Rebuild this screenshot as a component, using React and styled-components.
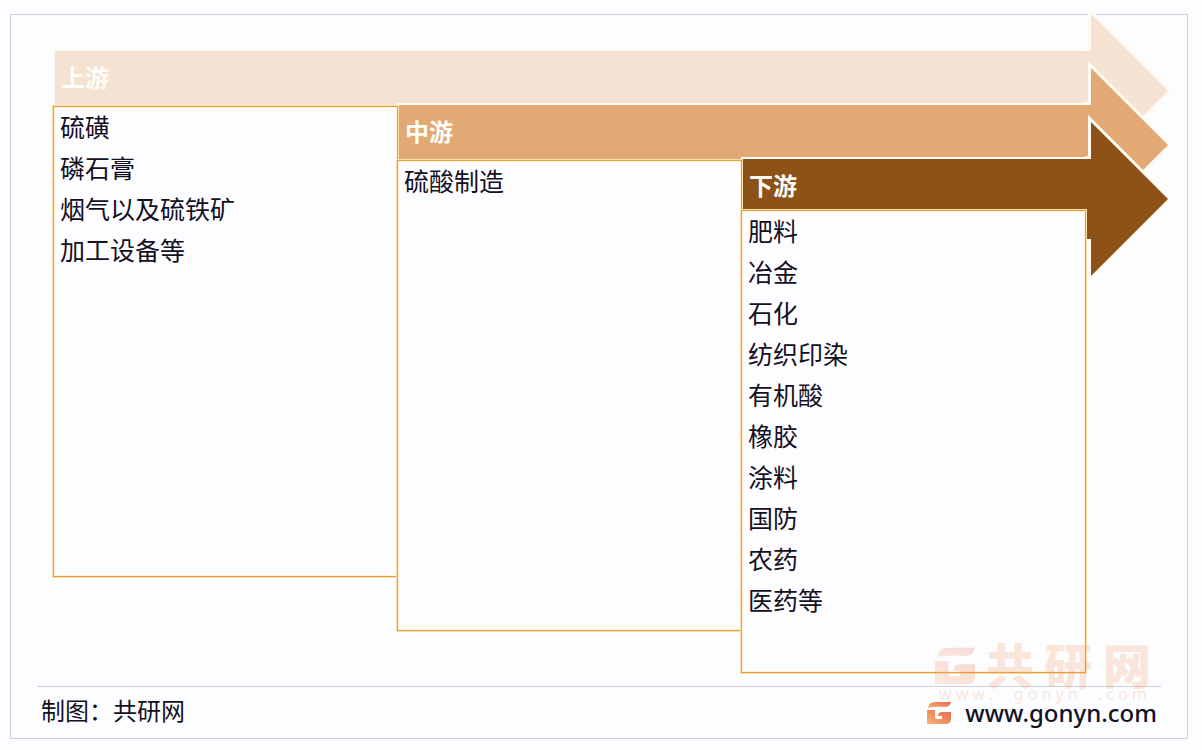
import styled, { createGlobalStyle } from "styled-components";

const STAGES = [
  {
    title: "上游",
    color: "#f5e2d3",
    bandHeight: 93,
    boxHeight: 471,
    items: ["硫磺", "磷石膏", "烟气以及硫铁矿", "加工设备等"],
  },
  {
    title: "中游",
    color: "#e2a974",
    bandHeight: 93,
    boxHeight: 471,
    items: ["硫酸制造"],
  },
  {
    title: "下游",
    color: "#8c5218",
    bandHeight: 89,
    boxHeight: 463,
    items: [
      "肥料",
      "冶金",
      "石化",
      "纺织印染",
      "有机酸",
      "橡胶",
      "涂料",
      "国防",
      "农药",
      "医药等",
    ],
  },
];

export default function App() {
  return (
    <StPage>
      <GlobalStyle />
      <StFrame>
        <StChain>
          {STAGES.map((stage, index) => (
            <Stage key={stage.title} index={index} {...stage} />
          ))}
        </StChain>
        <StFooter>
          <Watermark />
          <StCredit>制图：共研网</StCredit>
          <StSiteLink href='http://www.gonyn.com'>
            <Logo width={24} height={22} />
            www.gonyn.com
          </StSiteLink>
        </StFooter>
      </StFrame>
    </StPage>
  );
}

function Stage({ index, title, color, bandHeight, boxHeight, items }) {
  return (
    <StStage $index={index}>
      <StArrow>
        <StBand $color={color}>
          <StTitle>{title}</StTitle>
        </StBand>
        <StArrowHead viewBox='0 0 84 156' aria-hidden='true'>
          <path d='M0 38H6V1L83 78L6 155V118H0' fill={color} />
        </StArrowHead>
      </StArrow>
      <StBox $top={bandHeight} $height={boxHeight}>
        {items.map((item) => (
          <li key={item}>{item}</li>
        ))}
      </StBox>
    </StStage>
  );
}

function Logo({ width, height }) {
  return (
    <svg width={width} height={height} viewBox='0 0 24 22' aria-hidden='true'>
      <defs>
        <linearGradient id='logo' x1='1' y1='0' x2='0' y2='1'>
          <stop offset='0' stopColor='#e0694f' />
          <stop offset='1' stopColor='#f8b577' />
        </linearGradient>
      </defs>
      <g fill='url(#logo)'>
        <path d='M1 6Q2 0 8 0H24Q23 5 18 5Q7 4 1 6Z' />
        <path d='M0 8H8V15Q8 17 10 17H15V14H11Q11 10 15 10H24V18Q23 22 19 22H0Z' />
      </g>
    </svg>
  );
}

function Watermark() {
  return (
    <StWatermark aria-hidden='true'>
      <StWatermarkName>
        <Logo width={40} height={38} />
        <span>共</span>
        <span>研</span>
        <span>网</span>
      </StWatermarkName>
      <StWatermarkUrl>
        <span>w w w .</span>
        <span>g o n y n</span>
        <span>. c o m</span>
      </StWatermarkUrl>
    </StWatermark>
  );
}

const GlobalStyle = createGlobalStyle`
  * {
    box-sizing: border-box;
  }
  body {
    margin: 0;
    background-color: #fdfdff;
    color: #14101f;
    font-family: "Noto Sans", "Noto Sans CJK SC", sans-serif;
  }
`;
const StPage = styled.main`
  min-height: 100vh;
  padding: 14px 14px 11px 10px;

  display: flex;
`;
const StFrame = styled.section`
  flex: 1;
  display: flex;
  flex-direction: column;

  border: 1px solid #cdd0d8;
  background-color: #fcfdff;
`;
const StChain = styled.div`
  flex: 1;
  display: grid;
  grid-template-columns: repeat(3, 1fr) 84px;
  align-items: start;

  padding: 0 18px 0 42px;
`;
const StStage = styled.section`
  grid-row: 1;
  grid-column: ${({ $index }) => $index + 1} / -1;
  display: grid;
  grid-template-columns: subgrid;

  margin-top: ${({ $index }) => $index * 54 - 2}px;
`;
const StArrow = styled.header`
  grid-row: 1;
  grid-column: 1 / -1;
  display: flex;
  align-items: flex-start;
`;
const StBand = styled.div`
  flex: 1;
  height: 80px;
  margin: 38px 0 0 2px;
  padding: 8px 6px;

  background-color: ${({ $color }) => $color};
  box-shadow: 0 0 0 2px #fffaf2;
`;
const StTitle = styled.h2`
  margin: 0;

  color: #fffdf8;
  font-size: 24px;
  font-weight: 700;
  line-height: 38px;
`;
const StArrowHead = styled.svg`
  width: 84px;
  height: 156px;
  overflow: visible;

  path {
    stroke: #fffaf2;
    stroke-width: 6px;
    paint-order: stroke;
  }
`;
const StBox = styled.ul`
  grid-row: 1;
  grid-column: 1;
  z-index: 1;

  min-height: ${({ $height }) => $height}px;
  margin: ${({ $top }) => $top}px -1px 0 0;
  padding: 0 6px;
  border: 1px solid #e3a03f;
  box-shadow:
    0 0 0 1px #fbdfae,
    inset 0 0 0 1px #fff1d6;
  background-color: #fdfdff;

  list-style: none;
  font-size: 25px;
  line-height: 41px;
`;
const StFooter = styled.footer`
  position: relative;
  display: flex;
  align-items: center;
  justify-content: space-between;

  height: 52px;
  margin: 0 26px;
  padding: 0 4px;
  border-top: 1px solid #cdd0d8;

  font-size: 24px;
`;
const StCredit = styled.span`
  padding-bottom: 4px;

  line-height: 44px;
`;
const StSiteLink = styled.a`
  display: flex;
  align-items: center;
  gap: 14px;

  color: inherit;
  font-weight: 500;
  line-height: 24px;
  text-decoration: none;
`;
const StWatermark = styled.div`
  position: absolute;
  right: 10px;
  bottom: 36px;
  z-index: 2;

  width: 216px;

  color: #f29a6c;
  opacity: 0.24;
  pointer-events: none;
`;
const StWatermarkName = styled.div`
  display: flex;
  align-items: center;
  justify-content: space-between;

  font-size: 48px;
  font-weight: 900;
  line-height: 40px;
`;
const StWatermarkUrl = styled.div`
  display: flex;
  justify-content: space-between;

  padding: 0 4px;

  font-size: 16px;
  line-height: 16px;
`;
